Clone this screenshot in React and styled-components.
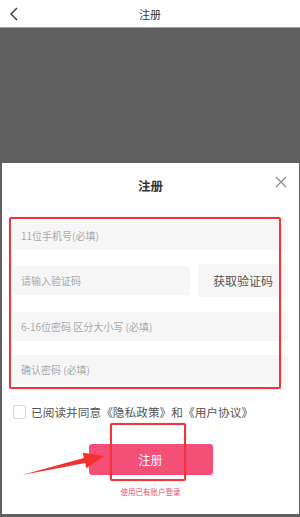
import React from "react";
import styled, { createGlobalStyle } from "styled-components";

const GlobalStyle = createGlobalStyle`
  html, body {
    margin: 0;
    padding: 0;
    background: #5f605f;
    font-family: "Noto Sans CJK SC", "Noto Sans", sans-serif;
  }
  * { box-sizing: border-box; }
`;

const Page = styled.div`
  position: relative;
  width: 300px;
  height: 517px;
  display: flex;
  flex-direction: column;
  background: #5f605f;
  overflow: hidden;
`;

const TopBar = styled.div`
  height: 28px;
  flex: none;
  display: flex;
  align-items: center;
  justify-content: center;
  position: relative;
  background: #fff;
  border-bottom: 1px solid #a3a3a3;
  font-size: 11px;
  color: #333;
`;

const BackButton = styled.svg`
  position: absolute;
  left: 9px;
  top: 7px;
`;

const Shade = styled.div`
  height: 135px;
  flex: none;
`;

const Modal = styled.div`
  flex: none;
  height: 351px;
  margin: 0 1px 0 2px;
  background: #fff;
  display: flex;
  flex-direction: column;
  padding: 0 11px;
  position: relative;
`;

const ModalTitle = styled.div`
  height: 44px;
  display: flex;
  align-items: center;
  justify-content: center;
  font-size: 12.5px;
  font-weight: 700;
  color: #333;
`;

const Close = styled.svg`
  position: absolute;
  right: 12px;
  top: 13px;
`;

const Form = styled.div`
  margin-top: 14px;
  display: flex;
  flex-direction: column;
`;

const Field = styled.div`
  height: ${(p) => p.h || 29}px;
  flex: ${(p) => (p.grow ? 1 : "none")};
  margin-top: ${(p) => p.mt || 0}px;
  background: #f6f6f6;
  border-radius: 3px;
  display: flex;
  align-items: center;
  padding-left: 8px;
  font-size: 10px;
  color: #a9a9a9;
  white-space: nowrap;
`;

const CodeRow = styled.div`
  height: 33px;
  margin-top: 14px;
  display: flex;
  align-items: center;
  gap: 8px;
`;

const CodeButton = styled.div`
  width: 90px;
  height: 33px;
  flex: none;
  background: #f6f6f6;
  border-radius: 3px;
  display: flex;
  align-items: center;
  justify-content: center;
  font-size: 12px;
  color: #555;
`;

const Agree = styled.div`
  margin-top: 19px;
  display: flex;
  align-items: center;
  gap: 5px;
  font-size: 11.7px;
  color: #555;
  white-space: nowrap;
`;

const Check = styled.span`
  width: 13px;
  height: 14px;
  border: 1px solid #d6d6d6;
  border-radius: 2px;
  background: #fff;
`;

const Submit = styled.div`
  align-self: center;
  margin-top: 24px;
  width: 124px;
  height: 31px;
  border-radius: 3px;
  background: #f44f77;
  color: #fff;
  font-size: 12px;
  display: flex;
  align-items: center;
  justify-content: center;
`;

const LoginLink = styled.div`
  align-self: center;
  margin-top: 11px;
  font-size: 7.5px;
  color: #e8506f;
`;

const Frame = styled.div`
  position: absolute;
  left: ${(p) => p.x}px;
  top: ${(p) => p.y}px;
  width: ${(p) => p.w}px;
  height: ${(p) => p.h}px;
  border: 2px solid #f5333a;
  border-radius: 2px;
  box-shadow: 0 0 1px rgba(245, 51, 58, 0.5);
  pointer-events: none;
`;

const Overlay = styled.svg`
  position: absolute;
  left: 0;
  top: 0;
  pointer-events: none;
`;

export default function App() {
  return (
    <Page>
      <GlobalStyle />
      <TopBar>
        <BackButton width="12" height="14" viewBox="0 0 12 14">
          <polyline points="8,1 2,7 8,13" fill="none" stroke="#333" strokeWidth="1.4" />
        </BackButton>
        注册
      </TopBar>
      <Shade />
      <Modal>
        <ModalTitle>注册</ModalTitle>
        <Close width="12" height="12" viewBox="0 0 12 12">
          <path d="M1 1 L11 11 M11 1 L1 11" stroke="#8a8a8a" strokeWidth="1.2" />
        </Close>
        <Form>
          <Field>11位手机号(必填)</Field>
          <CodeRow>
            <Field grow>请输入验证码</Field>
            <CodeButton>获取验证码</CodeButton>
          </CodeRow>
          <Field mt={15}>6-16位密码 区分大小写 (必填)</Field>
          <Field mt={14}>确认密码 (必填)</Field>
        </Form>
        <Agree>
          <Check />
          已阅读并同意《隐私政策》和《用户协议》
        </Agree>
        <Submit>注册</Submit>
        <LoginLink>使用已有账户登录</LoginLink>
      </Modal>
      <Frame x={9} y={217} w={272} h={172} />
      <Frame x={110} y={423} w={76} h={58} />
      <Overlay width="300" height="517" viewBox="0 0 300 517">
        <polygon
          points="22,475 83.9,458.1 82.7,452.7 104,456 86.3,468.3 85.1,462.9"
          fill="#f3302f"
        />
      </Overlay>
    </Page>
  );
}
